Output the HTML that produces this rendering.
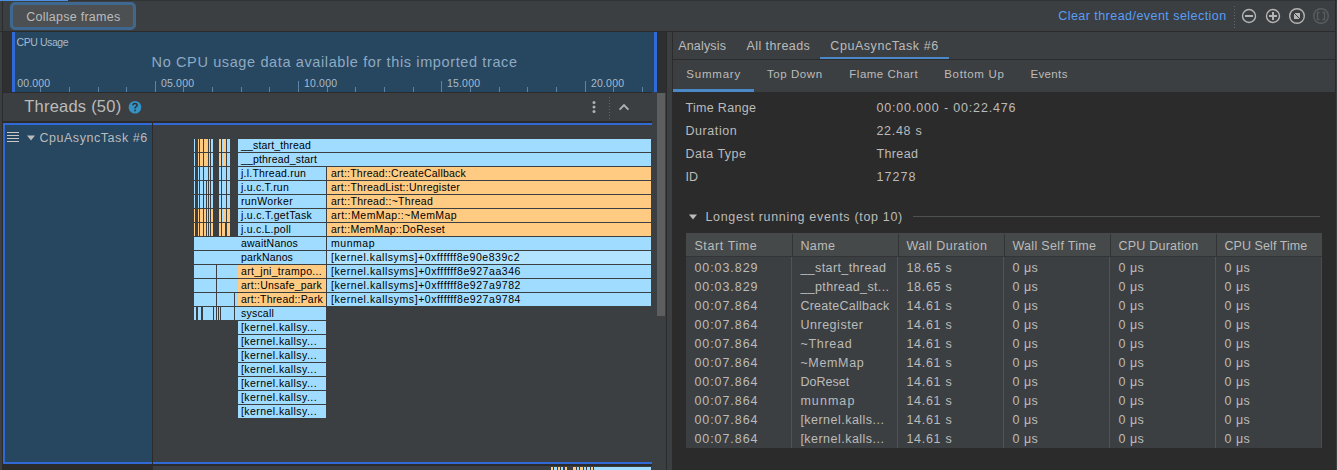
<!DOCTYPE html>
<html><head><meta charset="utf-8"><style>
html,body{margin:0;padding:0}
body{width:1337px;height:470px;overflow:hidden;position:relative;background:#3c3f41;font-family:"Liberation Sans",sans-serif}
.r{position:absolute}
.t{position:absolute;white-space:pre}
</style></head><body>
<div class="r" style="left:2px;top:0px;width:1px;height:470px;background:#2b2b2b;"></div>
<div class="r" style="left:3px;top:0px;width:1334px;height:1px;background:#313335;"></div>
<div class="r" style="left:0px;top:0px;width:68px;height:1px;background:#4a8fe0;"></div>
<div class="r" style="left:0px;top:31px;width:1335px;height:1px;background:#2b2b2b;"></div>
<div class="r" style="left:10px;top:2px;width:120px;height:22px;border:3px solid #3f6891;border-radius:5px;background:#4c5052"></div>
<div class="t" style="left:26.20px;top:11.42px;font-size:12.5px;line-height:12.5px;letter-spacing:0.263px;color:#bbbbbb;">Collapse frames</div>
<div class="t" style="left:1058.20px;top:10.32px;font-size:12.5px;line-height:12.5px;letter-spacing:0.458px;color:#589df6;">Clear thread/event selection</div>
<div class="r" style="left:1234px;top:6px;width:1px;height:23px;background:repeating-linear-gradient(to bottom,#65686a 0 1px,transparent 1px 3px)"></div>
<svg class="r" style="left:1238px;top:4px" width="95" height="25" viewBox="1238 4 95 25">
<g fill="none" stroke="#b5b5b5" stroke-width="1.4">
<circle cx="1249" cy="16" r="6.5"/><circle cx="1273" cy="16" r="6.5"/><circle cx="1297" cy="16" r="7.3"/>
</g>
<rect x="1245" y="15" width="8" height="2" fill="#b5b5b5"/>
<rect x="1269" y="15" width="8" height="2" fill="#b5b5b5"/><rect x="1272" y="12" width="2" height="8" fill="#b5b5b5"/>
<rect x="1294" y="13" width="6" height="6" fill="#b5b5b5"/><line x1="1294" y1="13" x2="1300" y2="19" stroke="#3c3f41" stroke-width="1"/>
<circle cx="1321" cy="16" r="7.3" fill="none" stroke="#5a5d5f" stroke-width="1.4"/>
<path d="M1319.5 12.5h-2v7h2M1322.5 12.5h2v7h-2" fill="none" stroke="#5a5d5f" stroke-width="1.3"/>
</svg>
<div class="r" style="left:1335px;top:0px;width:1px;height:470px;background:#2b2b2b;"></div>
<div class="r" style="left:3px;top:32px;width:9px;height:60px;background:#2d2f31;"></div>
<div class="r" style="left:12px;top:32px;width:3px;height:60px;background:#316ad6;"></div>
<div class="r" style="left:15px;top:32px;width:639px;height:60px;background:#274660;"></div>
<div class="r" style="left:654px;top:32px;width:3px;height:60px;background:#316ad6;"></div>
<div class="r" style="left:657px;top:32px;width:9px;height:61px;background:#2d2f31;"></div>
<div class="t" style="left:16.60px;top:37.11px;font-size:10.5px;line-height:10.5px;letter-spacing:-0.430px;color:#a9bbcb;">CPU Usage</div>
<div class="t" style="left:151.60px;top:54.73px;font-size:14.5px;line-height:14.5px;letter-spacing:0.619px;color:#8eaac3;">No CPU usage data available for this imported trace</div>
<div class="r" style="left:40px;top:87px;width:1px;height:5px;background:#5c84a6;"></div>
<div class="r" style="left:69px;top:87px;width:1px;height:5px;background:#5c84a6;"></div>
<div class="r" style="left:98px;top:87px;width:1px;height:5px;background:#5c84a6;"></div>
<div class="r" style="left:126px;top:87px;width:1px;height:5px;background:#5c84a6;"></div>
<div class="r" style="left:155px;top:81px;width:1px;height:11px;background:#5c84a6;"></div>
<div class="r" style="left:183px;top:87px;width:1px;height:5px;background:#5c84a6;"></div>
<div class="r" style="left:212px;top:87px;width:1px;height:5px;background:#5c84a6;"></div>
<div class="r" style="left:241px;top:87px;width:1px;height:5px;background:#5c84a6;"></div>
<div class="r" style="left:269px;top:87px;width:1px;height:5px;background:#5c84a6;"></div>
<div class="r" style="left:298px;top:81px;width:1px;height:11px;background:#5c84a6;"></div>
<div class="r" style="left:327px;top:87px;width:1px;height:5px;background:#5c84a6;"></div>
<div class="r" style="left:355px;top:87px;width:1px;height:5px;background:#5c84a6;"></div>
<div class="r" style="left:384px;top:87px;width:1px;height:5px;background:#5c84a6;"></div>
<div class="r" style="left:413px;top:87px;width:1px;height:5px;background:#5c84a6;"></div>
<div class="r" style="left:441px;top:81px;width:1px;height:11px;background:#5c84a6;"></div>
<div class="r" style="left:470px;top:87px;width:1px;height:5px;background:#5c84a6;"></div>
<div class="r" style="left:499px;top:87px;width:1px;height:5px;background:#5c84a6;"></div>
<div class="r" style="left:527px;top:87px;width:1px;height:5px;background:#5c84a6;"></div>
<div class="r" style="left:556px;top:87px;width:1px;height:5px;background:#5c84a6;"></div>
<div class="r" style="left:585px;top:81px;width:1px;height:11px;background:#5c84a6;"></div>
<div class="r" style="left:613px;top:87px;width:1px;height:5px;background:#5c84a6;"></div>
<div class="r" style="left:642px;top:87px;width:1px;height:5px;background:#5c84a6;"></div>
<div class="t" style="left:17.20px;top:78.11px;font-size:10.5px;line-height:10.5px;letter-spacing:0.174px;color:#a9bbcb;">00.000</div>
<div class="t" style="left:161.00px;top:78.11px;font-size:10.5px;line-height:10.5px;letter-spacing:0.174px;color:#a9bbcb;">05.000</div>
<div class="t" style="left:304.00px;top:78.11px;font-size:10.5px;line-height:10.5px;letter-spacing:0.174px;color:#a9bbcb;">10.000</div>
<div class="t" style="left:447.00px;top:78.11px;font-size:10.5px;line-height:10.5px;letter-spacing:0.174px;color:#a9bbcb;">15.000</div>
<div class="t" style="left:591.00px;top:78.11px;font-size:10.5px;line-height:10.5px;letter-spacing:0.174px;color:#a9bbcb;">20.000</div>
<div class="r" style="left:3px;top:92px;width:649px;height:1px;background:#2b2b2b;"></div>
<div class="t" style="left:24.20px;top:98.03px;font-size:16.5px;line-height:16.5px;letter-spacing:0.231px;color:#bbbbbb;">Threads (50)</div>
<svg class="r" style="left:127px;top:99px" width="16" height="16" viewBox="127 99 16 16"><circle cx="135" cy="107.2" r="6.3" fill="#3592c4"/><path d="M132.9 105.3 Q132.9 103.4 135 103.4 Q137.1 103.4 137.1 105.2 Q137.1 106.3 135.9 106.9 Q135 107.4 135 108.6" fill="none" stroke="#2f3335" stroke-width="1.5"/><rect x="134.2" y="109.7" width="1.6" height="1.6" fill="#2f3335"/></svg>
<svg class="r" style="left:590px;top:98px" width="8" height="18" viewBox="590 98 8 18"><g fill="#afb1b3"><circle cx="594" cy="102.5" r="1.5"/><circle cx="594" cy="107" r="1.5"/><circle cx="594" cy="111.5" r="1.5"/></g></svg>
<div class="r" style="left:609px;top:97px;width:1px;height:22px;background:repeating-linear-gradient(to bottom,#65686a 0 1px,transparent 1px 3px)"></div>
<svg class="r" style="left:617px;top:101px" width="14" height="12"><path d="M2.6 8.6 L7 4.2 L11.4 8.6" fill="none" stroke="#afb1b3" stroke-width="1.9"/></svg>
<div class="r" style="left:3px;top:121px;width:649px;height:2px;background:#2b2b2b;"></div>
<div class="r" style="left:3px;top:123px;width:149px;height:2px;background:#316ad6;"></div>
<div class="r" style="left:153px;top:123px;width:499px;height:2px;background:#316ad6;"></div>
<div class="r" style="left:3px;top:125px;width:2px;height:337px;background:#316ad6;"></div>
<div class="r" style="left:3px;top:462px;width:149px;height:2px;background:#316ad6;"></div>
<div class="r" style="left:153px;top:462px;width:499px;height:2px;background:#316ad6;"></div>
<div class="r" style="left:5px;top:125px;width:147px;height:337px;background:#274660;"></div>
<div class="r" style="left:152px;top:123px;width:1px;height:347px;background:#2b2b2b;"></div>
<div class="r" style="left:7px;top:132px;width:12px;height:1px;background:#c8c8c8;"></div>
<div class="r" style="left:7px;top:135px;width:12px;height:1px;background:#c8c8c8;"></div>
<div class="r" style="left:7px;top:138px;width:12px;height:1px;background:#c8c8c8;"></div>
<div class="r" style="left:7px;top:141px;width:12px;height:1px;background:#c8c8c8;"></div>
<svg class="r" style="left:26px;top:134.7px" width="10" height="7"><path d="M1 0.5 L9 0.5 L5 5.5 Z" fill="#bbbbbb"/></svg>
<div class="t" style="left:39.40px;top:132.22px;font-size:12.5px;line-height:12.5px;letter-spacing:0.553px;color:#bbbbbb;">CpuAsyncTask #6</div>
<div class="r" style="left:3px;top:464px;width:149px;height:6px;background:#2b2b2b;"></div>
<div class="r" style="left:152px;top:464px;width:500px;height:2px;background:#2b2b2b;"></div>
<div class="r" style="left:657px;top:93px;width:8px;height:223px;background:#5c5e60;"></div>
<div class="r" style="left:666px;top:32px;width:1px;height:438px;background:#2b2b2b;"></div>
<div class="r" style="left:672px;top:32px;width:1px;height:438px;background:#2b2b2b;"></div>
<div class="r" style="left:194px;top:139px;width:1px;height:13px;background:#a0dcff;"></div><div class="r" style="left:198px;top:139px;width:1px;height:13px;background:#ffca82;"></div><div class="r" style="left:200px;top:139px;width:3px;height:13px;background:#ffca82;"></div><div class="r" style="left:204px;top:139px;width:3px;height:13px;background:#ffca82;"></div><div class="r" style="left:207px;top:139px;width:1px;height:13px;background:#a0dcff;"></div><div class="r" style="left:209px;top:139px;width:1px;height:13px;background:#a0dcff;"></div><div class="r" style="left:211px;top:139px;width:1px;height:13px;background:#ffca82;"></div><div class="r" style="left:212px;top:139px;width:1px;height:13px;background:#a0dcff;"></div><div class="r" style="left:219px;top:139px;width:2px;height:13px;background:#ffca82;"></div><div class="r" style="left:222px;top:139px;width:1px;height:13px;background:#a0dcff;"></div><div class="r" style="left:223px;top:139px;width:2px;height:13px;background:#ffca82;"></div><div class="r" style="left:225px;top:139px;width:1px;height:13px;background:#a0dcff;"></div><div class="r" style="left:227px;top:139px;width:2px;height:13px;background:#a0dcff;"></div><div class="r" style="left:229px;top:139px;width:1px;height:13px;background:#ffca82;"></div>
<div class="r" style="left:194px;top:153px;width:1px;height:13px;background:#a0dcff;"></div><div class="r" style="left:198px;top:153px;width:1px;height:13px;background:#ffca82;"></div><div class="r" style="left:200px;top:153px;width:3px;height:13px;background:#ffca82;"></div><div class="r" style="left:204px;top:153px;width:3px;height:13px;background:#ffca82;"></div><div class="r" style="left:207px;top:153px;width:1px;height:13px;background:#a0dcff;"></div><div class="r" style="left:209px;top:153px;width:1px;height:13px;background:#a0dcff;"></div><div class="r" style="left:211px;top:153px;width:1px;height:13px;background:#ffca82;"></div><div class="r" style="left:212px;top:153px;width:1px;height:13px;background:#a0dcff;"></div><div class="r" style="left:219px;top:153px;width:2px;height:13px;background:#ffca82;"></div><div class="r" style="left:222px;top:153px;width:1px;height:13px;background:#a0dcff;"></div><div class="r" style="left:223px;top:153px;width:2px;height:13px;background:#ffca82;"></div><div class="r" style="left:225px;top:153px;width:1px;height:13px;background:#a0dcff;"></div><div class="r" style="left:227px;top:153px;width:2px;height:13px;background:#a0dcff;"></div><div class="r" style="left:229px;top:153px;width:1px;height:13px;background:#ffca82;"></div>
<div class="r" style="left:194px;top:167px;width:1px;height:13px;background:#a0dcff;"></div><div class="r" style="left:198px;top:167px;width:1px;height:13px;background:#a0dcff;"></div><div class="r" style="left:200px;top:167px;width:3px;height:13px;background:#a0dcff;"></div><div class="r" style="left:204px;top:167px;width:4px;height:13px;background:#a0dcff;"></div><div class="r" style="left:209px;top:167px;width:1px;height:13px;background:#a0dcff;"></div><div class="r" style="left:211px;top:167px;width:2px;height:13px;background:#a0dcff;"></div><div class="r" style="left:219px;top:167px;width:2px;height:13px;background:#a0dcff;"></div><div class="r" style="left:222px;top:167px;width:4px;height:13px;background:#a0dcff;"></div><div class="r" style="left:227px;top:167px;width:3px;height:13px;background:#a0dcff;"></div>
<div class="r" style="left:194px;top:181px;width:1px;height:13px;background:#a0dcff;"></div><div class="r" style="left:198px;top:181px;width:1px;height:13px;background:#a0dcff;"></div><div class="r" style="left:200px;top:181px;width:3px;height:13px;background:#a0dcff;"></div><div class="r" style="left:204px;top:181px;width:2px;height:13px;background:#a0dcff;"></div><div class="r" style="left:207px;top:181px;width:1px;height:13px;background:#a0dcff;"></div><div class="r" style="left:209px;top:181px;width:1px;height:13px;background:#a0dcff;"></div><div class="r" style="left:211px;top:181px;width:2px;height:13px;background:#a0dcff;"></div><div class="r" style="left:219px;top:181px;width:2px;height:13px;background:#a0dcff;"></div><div class="r" style="left:222px;top:181px;width:4px;height:13px;background:#a0dcff;"></div><div class="r" style="left:227px;top:181px;width:3px;height:13px;background:#a0dcff;"></div>
<div class="r" style="left:194px;top:195px;width:1px;height:13px;background:#a0dcff;"></div><div class="r" style="left:198px;top:195px;width:1px;height:13px;background:#a0dcff;"></div><div class="r" style="left:200px;top:195px;width:3px;height:13px;background:#a0dcff;"></div><div class="r" style="left:204px;top:195px;width:2px;height:13px;background:#a0dcff;"></div><div class="r" style="left:207px;top:195px;width:1px;height:13px;background:#a0dcff;"></div><div class="r" style="left:209px;top:195px;width:1px;height:13px;background:#a0dcff;"></div><div class="r" style="left:211px;top:195px;width:2px;height:13px;background:#a0dcff;"></div><div class="r" style="left:219px;top:195px;width:2px;height:13px;background:#a0dcff;"></div><div class="r" style="left:222px;top:195px;width:4px;height:13px;background:#a0dcff;"></div><div class="r" style="left:227px;top:195px;width:3px;height:13px;background:#a0dcff;"></div>
<div class="r" style="left:194px;top:209px;width:1px;height:13px;background:#ffca82;"></div><div class="r" style="left:198px;top:209px;width:1px;height:13px;background:#ffca82;"></div><div class="r" style="left:200px;top:209px;width:3px;height:13px;background:#ffca82;"></div><div class="r" style="left:204px;top:209px;width:2px;height:13px;background:#ffca82;"></div><div class="r" style="left:207px;top:209px;width:1px;height:13px;background:#ffca82;"></div><div class="r" style="left:209px;top:209px;width:1px;height:13px;background:#ffca82;"></div><div class="r" style="left:211px;top:209px;width:2px;height:13px;background:#ffca82;"></div><div class="r" style="left:219px;top:209px;width:2px;height:13px;background:#ffca82;"></div><div class="r" style="left:222px;top:209px;width:1px;height:13px;background:#a0dcff;"></div><div class="r" style="left:223px;top:209px;width:3px;height:13px;background:#ffca82;"></div><div class="r" style="left:227px;top:209px;width:3px;height:13px;background:#ffca82;"></div>
<div class="r" style="left:194px;top:223px;width:1px;height:13px;background:#ffca82;"></div><div class="r" style="left:198px;top:223px;width:1px;height:13px;background:#ffca82;"></div><div class="r" style="left:200px;top:223px;width:3px;height:13px;background:#ffca82;"></div><div class="r" style="left:204px;top:223px;width:2px;height:13px;background:#ffca82;"></div><div class="r" style="left:207px;top:223px;width:1px;height:13px;background:#ffca82;"></div><div class="r" style="left:209px;top:223px;width:1px;height:13px;background:#ffca82;"></div><div class="r" style="left:211px;top:223px;width:2px;height:13px;background:#ffca82;"></div><div class="r" style="left:219px;top:223px;width:2px;height:13px;background:#ffca82;"></div><div class="r" style="left:222px;top:223px;width:3px;height:13px;background:#ffca82;"></div><div class="r" style="left:227px;top:223px;width:3px;height:13px;background:#ffca82;"></div>
<div class="r" style="left:238px;top:139px;width:413px;height:13px;background:#a0dcff;"></div><div class="t" style="left:241.00px;top:140.11px;font-size:10.5px;line-height:10.5px;letter-spacing:0.164px;color:#000000;">__start_thread</div>
<div class="r" style="left:238px;top:153px;width:413px;height:13px;background:#a0dcff;"></div><div class="t" style="left:241.00px;top:154.11px;font-size:10.5px;line-height:10.5px;letter-spacing:0.164px;color:#000000;">__pthread_start</div>
<div class="r" style="left:238px;top:167px;width:88px;height:13px;background:#a0dcff;"></div><div class="t" style="left:241.00px;top:168.11px;font-size:10.5px;line-height:10.5px;letter-spacing:0.225px;color:#000000;">j.l.Thread.run</div>
<div class="r" style="left:327px;top:167px;width:324px;height:13px;background:#ffca82;"></div><div class="t" style="left:331.00px;top:168.11px;font-size:10.5px;line-height:10.5px;letter-spacing:0.224px;color:#000000;">art::Thread::CreateCallback</div>
<div class="r" style="left:238px;top:181px;width:88px;height:13px;background:#a0dcff;"></div><div class="t" style="left:241.00px;top:182.11px;font-size:10.5px;line-height:10.5px;letter-spacing:0.226px;color:#000000;">j.u.c.T.run</div>
<div class="r" style="left:327px;top:181px;width:324px;height:13px;background:#ffca82;"></div><div class="t" style="left:331.00px;top:182.11px;font-size:10.5px;line-height:10.5px;letter-spacing:0.261px;color:#000000;">art::ThreadList::Unregister</div>
<div class="r" style="left:238px;top:195px;width:88px;height:13px;background:#a0dcff;"></div><div class="t" style="left:241.00px;top:196.11px;font-size:10.5px;line-height:10.5px;letter-spacing:0.354px;color:#000000;">runWorker</div>
<div class="r" style="left:327px;top:195px;width:324px;height:13px;background:#ffca82;"></div><div class="t" style="left:331.00px;top:196.11px;font-size:10.5px;line-height:10.5px;letter-spacing:0.271px;color:#000000;">art::Thread::~Thread</div>
<div class="r" style="left:238px;top:209px;width:88px;height:13px;background:#a0dcff;"></div><div class="t" style="left:241.00px;top:210.11px;font-size:10.5px;line-height:10.5px;letter-spacing:0.298px;color:#000000;">j.u.c.T.getTask</div>
<div class="r" style="left:327px;top:209px;width:324px;height:13px;background:#ffca82;"></div><div class="t" style="left:331.00px;top:210.11px;font-size:10.5px;line-height:10.5px;letter-spacing:0.422px;color:#000000;">art::MemMap::~MemMap</div>
<div class="r" style="left:238px;top:223px;width:88px;height:13px;background:#a0dcff;"></div><div class="t" style="left:241.00px;top:224.11px;font-size:10.5px;line-height:10.5px;letter-spacing:0.227px;color:#000000;">j.u.c.L.poll</div>
<div class="r" style="left:327px;top:223px;width:324px;height:13px;background:#ffca82;"></div><div class="t" style="left:331.00px;top:224.11px;font-size:10.5px;line-height:10.5px;letter-spacing:0.274px;color:#000000;">art::MemMap::DoReset</div>
<div class="r" style="left:194px;top:237px;width:132px;height:13px;background:#a0dcff;"></div><div class="t" style="left:241.00px;top:238.11px;font-size:10.5px;line-height:10.5px;letter-spacing:0.214px;color:#000000;">awaitNanos</div>
<div class="r" style="left:327px;top:237px;width:324px;height:13px;background:#a0dcff;"></div><div class="t" style="left:331.00px;top:238.11px;font-size:10.5px;line-height:10.5px;letter-spacing:0.525px;color:#000000;">munmap</div>
<div class="r" style="left:194px;top:251px;width:132px;height:13px;background:#a0dcff;"></div><div class="t" style="left:241.00px;top:252.11px;font-size:10.5px;line-height:10.5px;letter-spacing:0.136px;color:#000000;">parkNanos</div>
<div class="r" style="left:327px;top:251px;width:324px;height:13px;background:#b2e4ff;"></div><div class="t" style="left:331.00px;top:252.11px;font-size:10.5px;line-height:10.5px;letter-spacing:0.551px;color:#000000;">[kernel.kallsyms]+0xffffff8e90e839c2</div>
<div class="r" style="left:194px;top:265px;width:22px;height:13px;background:#a0dcff;"></div>
<div class="r" style="left:217px;top:265px;width:21px;height:13px;background:#a0dcff;"></div>
<div class="r" style="left:238px;top:265px;width:88px;height:13px;background:#ffca82;"></div><div class="t" style="left:241.00px;top:266.11px;font-size:10.5px;line-height:10.5px;letter-spacing:0.302px;color:#000000;">art_jni_trampo...</div>
<div class="r" style="left:327px;top:265px;width:324px;height:13px;background:#a0dcff;"></div><div class="t" style="left:331.00px;top:266.11px;font-size:10.5px;line-height:10.5px;letter-spacing:0.562px;color:#000000;">[kernel.kallsyms]+0xffffff8e927aa346</div>
<div class="r" style="left:194px;top:279px;width:22px;height:13px;background:#a0dcff;"></div>
<div class="r" style="left:217px;top:279px;width:21px;height:13px;background:#a0dcff;"></div>
<div class="r" style="left:238px;top:279px;width:88px;height:13px;background:#ffca82;"></div><div class="t" style="left:241.00px;top:280.11px;font-size:10.5px;line-height:10.5px;letter-spacing:0.211px;color:#000000;">art::Unsafe_park</div>
<div class="r" style="left:327px;top:279px;width:324px;height:13px;background:#a0dcff;"></div><div class="t" style="left:331.00px;top:280.11px;font-size:10.5px;line-height:10.5px;letter-spacing:0.562px;color:#000000;">[kernel.kallsyms]+0xffffff8e927a9782</div>
<div class="r" style="left:194px;top:293px;width:22px;height:13px;background:#a0dcff;"></div>
<div class="r" style="left:217px;top:293px;width:17px;height:13px;background:#a0dcff;"></div>
<div class="r" style="left:235px;top:293px;width:3px;height:13px;background:#a0dcff;"></div>
<div class="r" style="left:238px;top:293px;width:88px;height:13px;background:#ffca82;"></div><div class="t" style="left:241.00px;top:294.11px;font-size:10.5px;line-height:10.5px;letter-spacing:0.190px;color:#000000;">art::Thread::Park</div>
<div class="r" style="left:327px;top:293px;width:324px;height:13px;background:#a0dcff;"></div><div class="t" style="left:331.00px;top:294.11px;font-size:10.5px;line-height:10.5px;letter-spacing:0.562px;color:#000000;">[kernel.kallsyms]+0xffffff8e927a9784</div>
<div class="r" style="left:194px;top:307px;width:2px;height:13px;background:#a0dcff;"></div>
<div class="r" style="left:198px;top:307px;width:3px;height:13px;background:#a0dcff;"></div>
<div class="r" style="left:203px;top:307px;width:10px;height:13px;background:#a0dcff;"></div>
<div class="r" style="left:214px;top:307px;width:2px;height:13px;background:#a0dcff;"></div>
<div class="r" style="left:217px;top:307px;width:1px;height:13px;background:#a0dcff;"></div>
<div class="r" style="left:219px;top:307px;width:1px;height:13px;background:#a0dcff;"></div>
<div class="r" style="left:221px;top:307px;width:13px;height:13px;background:#a0dcff;"></div>
<div class="r" style="left:235px;top:307px;width:91px;height:13px;background:#a0dcff;"></div><div class="t" style="left:241.00px;top:308.11px;font-size:10.5px;line-height:10.5px;letter-spacing:0.214px;color:#000000;">syscall</div>
<div class="r" style="left:238px;top:321px;width:88px;height:13px;background:#a0dcff;"></div><div class="t" style="left:241.00px;top:322.11px;font-size:10.5px;line-height:10.5px;letter-spacing:0.432px;color:#000000;">[kernel.kallsy...</div>
<div class="r" style="left:238px;top:335px;width:88px;height:13px;background:#a0dcff;"></div><div class="t" style="left:241.00px;top:336.11px;font-size:10.5px;line-height:10.5px;letter-spacing:0.432px;color:#000000;">[kernel.kallsy...</div>
<div class="r" style="left:238px;top:349px;width:88px;height:13px;background:#a0dcff;"></div><div class="t" style="left:241.00px;top:350.11px;font-size:10.5px;line-height:10.5px;letter-spacing:0.432px;color:#000000;">[kernel.kallsy...</div>
<div class="r" style="left:238px;top:363px;width:88px;height:13px;background:#a0dcff;"></div><div class="t" style="left:241.00px;top:364.11px;font-size:10.5px;line-height:10.5px;letter-spacing:0.432px;color:#000000;">[kernel.kallsy...</div>
<div class="r" style="left:238px;top:377px;width:88px;height:13px;background:#a0dcff;"></div><div class="t" style="left:241.00px;top:378.11px;font-size:10.5px;line-height:10.5px;letter-spacing:0.432px;color:#000000;">[kernel.kallsy...</div>
<div class="r" style="left:238px;top:391px;width:88px;height:13px;background:#a0dcff;"></div><div class="t" style="left:241.00px;top:392.11px;font-size:10.5px;line-height:10.5px;letter-spacing:0.432px;color:#000000;">[kernel.kallsy...</div>
<div class="r" style="left:238px;top:405px;width:88px;height:13px;background:#a0dcff;"></div><div class="t" style="left:241.00px;top:406.11px;font-size:10.5px;line-height:10.5px;letter-spacing:0.432px;color:#000000;">[kernel.kallsy...</div>
<div class="r" style="left:551px;top:467px;width:2px;height:3px;background:#ffca82;"></div>
<div class="r" style="left:554px;top:467px;width:3px;height:3px;background:#a0dcff;"></div>
<div class="r" style="left:558px;top:467px;width:2px;height:3px;background:#ffca82;"></div>
<div class="r" style="left:561px;top:467px;width:2px;height:3px;background:#a0dcff;"></div>
<div class="r" style="left:565px;top:467px;width:2px;height:3px;background:#ffca82;"></div>
<div class="r" style="left:573px;top:467px;width:3px;height:3px;background:#ffca82;"></div>
<div class="r" style="left:577px;top:467px;width:2px;height:3px;background:#a0dcff;"></div>
<div class="r" style="left:580px;top:467px;width:3px;height:3px;background:#ffca82;"></div>
<div class="r" style="left:584px;top:467px;width:2px;height:3px;background:#a0dcff;"></div>
<div class="r" style="left:587px;top:467px;width:3px;height:3px;background:#a0dcff;"></div>
<div class="r" style="left:591px;top:467px;width:2px;height:3px;background:#ffca82;"></div>
<div class="r" style="left:594px;top:467px;width:57px;height:3px;background:#a0dcff;"></div>
<div class="r" style="left:673px;top:59px;width:663px;height:1px;background:#2b2b2b;"></div>
<div class="t" style="left:678.20px;top:40.12px;font-size:12.5px;line-height:12.5px;letter-spacing:0.177px;color:#bbbbbb;">Analysis</div>
<div class="t" style="left:746.50px;top:40.12px;font-size:12.5px;line-height:12.5px;letter-spacing:0.424px;color:#bbbbbb;">All threads</div>
<div class="t" style="left:830.30px;top:40.12px;font-size:12.5px;line-height:12.5px;letter-spacing:0.553px;color:#bbbbbb;">CpuAsyncTask #6</div>
<div class="r" style="left:820px;top:57px;width:129px;height:2px;background:#4a88c7;"></div>
<div class="t" style="left:686.20px;top:69.27px;font-size:11.5px;line-height:11.5px;letter-spacing:0.813px;color:#bbbbbb;">Summary</div>
<div class="t" style="left:767.00px;top:69.27px;font-size:11.5px;line-height:11.5px;letter-spacing:0.555px;color:#bbbbbb;">Top Down</div>
<div class="t" style="left:849.30px;top:69.27px;font-size:11.5px;line-height:11.5px;letter-spacing:0.505px;color:#bbbbbb;">Flame Chart</div>
<div class="t" style="left:944.30px;top:69.27px;font-size:11.5px;line-height:11.5px;letter-spacing:0.645px;color:#bbbbbb;">Bottom Up</div>
<div class="t" style="left:1030.40px;top:69.27px;font-size:11.5px;line-height:11.5px;letter-spacing:0.373px;color:#bbbbbb;">Events</div>
<div class="r" style="left:673px;top:89px;width:81px;height:3px;background:#4a88c7;"></div>
<div class="r" style="left:673px;top:92px;width:662px;height:378px;background:#2b2b2b;"></div>
<div class="t" style="left:685.40px;top:101.92px;font-size:12.5px;line-height:12.5px;letter-spacing:0.338px;color:#bbbbbb;">Time Range</div>
<div class="t" style="left:876.40px;top:101.92px;font-size:12.5px;line-height:12.5px;letter-spacing:0.842px;color:#bbbbbb;">00:00.000 - 00:22.476</div>
<div class="t" style="left:685.40px;top:124.92px;font-size:12.5px;line-height:12.5px;letter-spacing:0.594px;color:#bbbbbb;">Duration</div>
<div class="t" style="left:876.40px;top:124.92px;font-size:12.5px;line-height:12.5px;letter-spacing:0.714px;color:#bbbbbb;">22.48 s</div>
<div class="t" style="left:685.40px;top:147.92px;font-size:12.5px;line-height:12.5px;letter-spacing:0.473px;color:#bbbbbb;">Data Type</div>
<div class="t" style="left:876.40px;top:147.92px;font-size:12.5px;line-height:12.5px;letter-spacing:0.400px;color:#bbbbbb;">Thread</div>
<div class="t" style="left:685.40px;top:170.92px;font-size:12.5px;line-height:12.5px;letter-spacing:0.250px;color:#bbbbbb;">ID</div>
<div class="t" style="left:876.40px;top:170.92px;font-size:12.5px;line-height:12.5px;letter-spacing:1.049px;color:#bbbbbb;">17278</div>
<svg class="r" style="left:688px;top:213.8px" width="10" height="7"><path d="M1 0.5 L9 0.5 L5 5.5 Z" fill="#bbbbbb"/></svg>
<div class="t" style="left:705.40px;top:210.62px;font-size:12.5px;line-height:12.5px;letter-spacing:0.677px;color:#bbbbbb;">Longest running events (top 10)</div>
<div class="r" style="left:913px;top:216px;width:407px;height:1px;background:#4e5152;"></div>
<div class="r" style="left:686px;top:233px;width:636px;height:23px;background:#45494a;"></div>
<div class="r" style="left:686px;top:256px;width:636px;height:1px;background:#323436;"></div>
<div class="r" style="left:686px;top:257px;width:636px;height:191px;background:#3c3f41;"></div>
<div class="r" style="left:1321px;top:257px;width:1px;height:191px;background:#4a4d4f;"></div>
<div class="r" style="left:792px;top:234px;width:1px;height:22px;background:#323436;"></div>
<div class="r" style="left:791px;top:257px;width:1px;height:191px;background:#505355;"></div>
<div class="r" style="left:898px;top:234px;width:1px;height:22px;background:#323436;"></div>
<div class="r" style="left:897px;top:257px;width:1px;height:191px;background:#505355;"></div>
<div class="r" style="left:1004px;top:234px;width:1px;height:22px;background:#323436;"></div>
<div class="r" style="left:1003px;top:257px;width:1px;height:191px;background:#505355;"></div>
<div class="r" style="left:1110px;top:234px;width:1px;height:22px;background:#323436;"></div>
<div class="r" style="left:1109px;top:257px;width:1px;height:191px;background:#505355;"></div>
<div class="r" style="left:1216px;top:234px;width:1px;height:22px;background:#323436;"></div>
<div class="r" style="left:1215px;top:257px;width:1px;height:191px;background:#505355;"></div>
<div class="t" style="left:694.40px;top:240.12px;font-size:12.5px;line-height:12.5px;letter-spacing:0.604px;color:#bbbbbb;">Start Time</div>
<div class="t" style="left:800.40px;top:240.12px;font-size:12.5px;line-height:12.5px;letter-spacing:0.415px;color:#bbbbbb;">Name</div>
<div class="t" style="left:906.40px;top:240.12px;font-size:12.5px;line-height:12.5px;letter-spacing:0.495px;color:#bbbbbb;">Wall Duration</div>
<div class="t" style="left:1012.40px;top:240.12px;font-size:12.5px;line-height:12.5px;letter-spacing:0.328px;color:#bbbbbb;">Wall Self Time</div>
<div class="t" style="left:1118.40px;top:240.12px;font-size:12.5px;line-height:12.5px;letter-spacing:0.241px;color:#bbbbbb;">CPU Duration</div>
<div class="t" style="left:1224.40px;top:240.12px;font-size:12.5px;line-height:12.5px;letter-spacing:0.080px;color:#bbbbbb;">CPU Self Time</div>
<div class="t" style="left:694.40px;top:261.82px;font-size:12.5px;line-height:12.5px;letter-spacing:0.933px;color:#bbbbbb;">00:03.829</div>
<div class="t" style="left:800.40px;top:261.82px;font-size:12.5px;line-height:12.5px;letter-spacing:0.386px;color:#bbbbbb;">__start_thread</div>
<div class="t" style="left:906.40px;top:261.82px;font-size:12.5px;line-height:12.5px;letter-spacing:0.714px;color:#bbbbbb;">18.65 s</div>
<div class="t" style="left:1012.40px;top:261.82px;font-size:12.5px;line-height:12.5px;letter-spacing:0.531px;color:#bbbbbb;">0 μs</div>
<div class="t" style="left:1118.40px;top:261.82px;font-size:12.5px;line-height:12.5px;letter-spacing:0.531px;color:#bbbbbb;">0 μs</div>
<div class="t" style="left:1224.40px;top:261.82px;font-size:12.5px;line-height:12.5px;letter-spacing:0.531px;color:#bbbbbb;">0 μs</div>
<div class="t" style="left:694.40px;top:280.82px;font-size:12.5px;line-height:12.5px;letter-spacing:0.933px;color:#bbbbbb;">00:03.829</div>
<div class="t" style="left:800.40px;top:280.82px;font-size:12.5px;line-height:12.5px;letter-spacing:0.374px;color:#bbbbbb;">__pthread_st...</div>
<div class="t" style="left:906.40px;top:280.82px;font-size:12.5px;line-height:12.5px;letter-spacing:0.714px;color:#bbbbbb;">18.65 s</div>
<div class="t" style="left:1012.40px;top:280.82px;font-size:12.5px;line-height:12.5px;letter-spacing:0.531px;color:#bbbbbb;">0 μs</div>
<div class="t" style="left:1118.40px;top:280.82px;font-size:12.5px;line-height:12.5px;letter-spacing:0.531px;color:#bbbbbb;">0 μs</div>
<div class="t" style="left:1224.40px;top:280.82px;font-size:12.5px;line-height:12.5px;letter-spacing:0.531px;color:#bbbbbb;">0 μs</div>
<div class="t" style="left:694.40px;top:299.82px;font-size:12.5px;line-height:12.5px;letter-spacing:0.933px;color:#bbbbbb;">00:07.864</div>
<div class="t" style="left:800.40px;top:299.82px;font-size:12.5px;line-height:12.5px;letter-spacing:0.253px;color:#bbbbbb;">CreateCallback</div>
<div class="t" style="left:906.40px;top:299.82px;font-size:12.5px;line-height:12.5px;letter-spacing:0.714px;color:#bbbbbb;">14.61 s</div>
<div class="t" style="left:1012.40px;top:299.82px;font-size:12.5px;line-height:12.5px;letter-spacing:0.531px;color:#bbbbbb;">0 μs</div>
<div class="t" style="left:1118.40px;top:299.82px;font-size:12.5px;line-height:12.5px;letter-spacing:0.531px;color:#bbbbbb;">0 μs</div>
<div class="t" style="left:1224.40px;top:299.82px;font-size:12.5px;line-height:12.5px;letter-spacing:0.531px;color:#bbbbbb;">0 μs</div>
<div class="t" style="left:694.40px;top:318.82px;font-size:12.5px;line-height:12.5px;letter-spacing:0.933px;color:#bbbbbb;">00:07.864</div>
<div class="t" style="left:800.40px;top:318.82px;font-size:12.5px;line-height:12.5px;letter-spacing:0.534px;color:#bbbbbb;">Unregister</div>
<div class="t" style="left:906.40px;top:318.82px;font-size:12.5px;line-height:12.5px;letter-spacing:0.714px;color:#bbbbbb;">14.61 s</div>
<div class="t" style="left:1012.40px;top:318.82px;font-size:12.5px;line-height:12.5px;letter-spacing:0.531px;color:#bbbbbb;">0 μs</div>
<div class="t" style="left:1118.40px;top:318.82px;font-size:12.5px;line-height:12.5px;letter-spacing:0.531px;color:#bbbbbb;">0 μs</div>
<div class="t" style="left:1224.40px;top:318.82px;font-size:12.5px;line-height:12.5px;letter-spacing:0.531px;color:#bbbbbb;">0 μs</div>
<div class="t" style="left:694.40px;top:337.82px;font-size:12.5px;line-height:12.5px;letter-spacing:0.933px;color:#bbbbbb;">00:07.864</div>
<div class="t" style="left:800.40px;top:337.82px;font-size:12.5px;line-height:12.5px;letter-spacing:0.728px;color:#bbbbbb;">~Thread</div>
<div class="t" style="left:906.40px;top:337.82px;font-size:12.5px;line-height:12.5px;letter-spacing:0.714px;color:#bbbbbb;">14.61 s</div>
<div class="t" style="left:1012.40px;top:337.82px;font-size:12.5px;line-height:12.5px;letter-spacing:0.531px;color:#bbbbbb;">0 μs</div>
<div class="t" style="left:1118.40px;top:337.82px;font-size:12.5px;line-height:12.5px;letter-spacing:0.531px;color:#bbbbbb;">0 μs</div>
<div class="t" style="left:1224.40px;top:337.82px;font-size:12.5px;line-height:12.5px;letter-spacing:0.531px;color:#bbbbbb;">0 μs</div>
<div class="t" style="left:694.40px;top:356.82px;font-size:12.5px;line-height:12.5px;letter-spacing:0.933px;color:#bbbbbb;">00:07.864</div>
<div class="t" style="left:800.40px;top:356.82px;font-size:12.5px;line-height:12.5px;letter-spacing:0.658px;color:#bbbbbb;">~MemMap</div>
<div class="t" style="left:906.40px;top:356.82px;font-size:12.5px;line-height:12.5px;letter-spacing:0.714px;color:#bbbbbb;">14.61 s</div>
<div class="t" style="left:1012.40px;top:356.82px;font-size:12.5px;line-height:12.5px;letter-spacing:0.531px;color:#bbbbbb;">0 μs</div>
<div class="t" style="left:1118.40px;top:356.82px;font-size:12.5px;line-height:12.5px;letter-spacing:0.531px;color:#bbbbbb;">0 μs</div>
<div class="t" style="left:1224.40px;top:356.82px;font-size:12.5px;line-height:12.5px;letter-spacing:0.531px;color:#bbbbbb;">0 μs</div>
<div class="t" style="left:694.40px;top:375.82px;font-size:12.5px;line-height:12.5px;letter-spacing:0.933px;color:#bbbbbb;">00:07.864</div>
<div class="t" style="left:800.40px;top:375.82px;font-size:12.5px;line-height:12.5px;letter-spacing:0.053px;color:#bbbbbb;">DoReset</div>
<div class="t" style="left:906.40px;top:375.82px;font-size:12.5px;line-height:12.5px;letter-spacing:0.714px;color:#bbbbbb;">14.61 s</div>
<div class="t" style="left:1012.40px;top:375.82px;font-size:12.5px;line-height:12.5px;letter-spacing:0.531px;color:#bbbbbb;">0 μs</div>
<div class="t" style="left:1118.40px;top:375.82px;font-size:12.5px;line-height:12.5px;letter-spacing:0.531px;color:#bbbbbb;">0 μs</div>
<div class="t" style="left:1224.40px;top:375.82px;font-size:12.5px;line-height:12.5px;letter-spacing:0.531px;color:#bbbbbb;">0 μs</div>
<div class="t" style="left:694.40px;top:394.82px;font-size:12.5px;line-height:12.5px;letter-spacing:0.933px;color:#bbbbbb;">00:07.864</div>
<div class="t" style="left:800.40px;top:394.82px;font-size:12.5px;line-height:12.5px;letter-spacing:1.062px;color:#bbbbbb;">munmap</div>
<div class="t" style="left:906.40px;top:394.82px;font-size:12.5px;line-height:12.5px;letter-spacing:0.714px;color:#bbbbbb;">14.61 s</div>
<div class="t" style="left:1012.40px;top:394.82px;font-size:12.5px;line-height:12.5px;letter-spacing:0.531px;color:#bbbbbb;">0 μs</div>
<div class="t" style="left:1118.40px;top:394.82px;font-size:12.5px;line-height:12.5px;letter-spacing:0.531px;color:#bbbbbb;">0 μs</div>
<div class="t" style="left:1224.40px;top:394.82px;font-size:12.5px;line-height:12.5px;letter-spacing:0.531px;color:#bbbbbb;">0 μs</div>
<div class="t" style="left:694.40px;top:413.82px;font-size:12.5px;line-height:12.5px;letter-spacing:0.933px;color:#bbbbbb;">00:07.864</div>
<div class="t" style="left:800.40px;top:413.82px;font-size:12.5px;line-height:12.5px;letter-spacing:0.474px;color:#bbbbbb;">[kernel.kalls...</div>
<div class="t" style="left:906.40px;top:413.82px;font-size:12.5px;line-height:12.5px;letter-spacing:0.714px;color:#bbbbbb;">14.61 s</div>
<div class="t" style="left:1012.40px;top:413.82px;font-size:12.5px;line-height:12.5px;letter-spacing:0.531px;color:#bbbbbb;">0 μs</div>
<div class="t" style="left:1118.40px;top:413.82px;font-size:12.5px;line-height:12.5px;letter-spacing:0.531px;color:#bbbbbb;">0 μs</div>
<div class="t" style="left:1224.40px;top:413.82px;font-size:12.5px;line-height:12.5px;letter-spacing:0.531px;color:#bbbbbb;">0 μs</div>
<div class="t" style="left:694.40px;top:432.82px;font-size:12.5px;line-height:12.5px;letter-spacing:0.933px;color:#bbbbbb;">00:07.864</div>
<div class="t" style="left:800.40px;top:432.82px;font-size:12.5px;line-height:12.5px;letter-spacing:0.474px;color:#bbbbbb;">[kernel.kalls...</div>
<div class="t" style="left:906.40px;top:432.82px;font-size:12.5px;line-height:12.5px;letter-spacing:0.714px;color:#bbbbbb;">14.61 s</div>
<div class="t" style="left:1012.40px;top:432.82px;font-size:12.5px;line-height:12.5px;letter-spacing:0.531px;color:#bbbbbb;">0 μs</div>
<div class="t" style="left:1118.40px;top:432.82px;font-size:12.5px;line-height:12.5px;letter-spacing:0.531px;color:#bbbbbb;">0 μs</div>
<div class="t" style="left:1224.40px;top:432.82px;font-size:12.5px;line-height:12.5px;letter-spacing:0.531px;color:#bbbbbb;">0 μs</div>
</body></html>
